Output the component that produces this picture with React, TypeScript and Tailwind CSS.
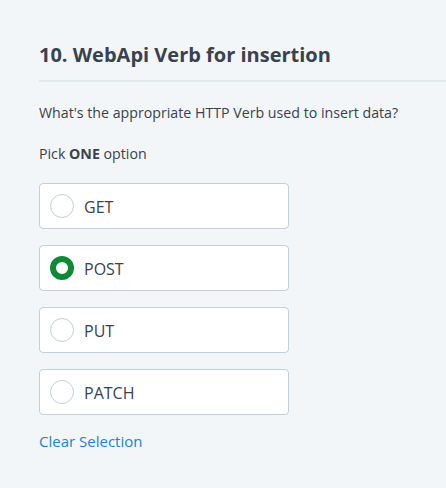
import React from "react";

const options = ["GET", "POST", "PUT", "PATCH"];

export default function App() {
  const selected = "POST";
  return (
    <div
      className="w-[446px] h-[488px] bg-[#f3f6f8] text-[#39424e] pl-[39px] pt-[40px] overflow-hidden"
      style={{ fontFamily: '"Open Sans", sans-serif' }}
    >
      <h2 className="text-[20px] font-bold leading-[30px] text-[#39424e]">10. WebApi Verb for insertion</h2>
      <div className="mt-[10px] h-[2px] bg-[#e4e9ec]" />
      <p className="mt-[20px] text-[14.2px] leading-[22px] text-[#39424e]">What's the appropriate HTTP Verb used to insert data?</p>
      <p className="mt-[19px] text-[14.2px] leading-[22px] text-[#39424e]">
        Pick <span className="font-bold">ONE</span> option
      </p>
      <div className="mt-[18px] flex flex-col gap-[16px] w-[250px]">
        {options.map((o) => (
          <div
            key={o}
            className="h-[46px] bg-white border border-[#c2cfd6] rounded-[4px] flex items-center pl-[10px]"
          >
            {o === selected ? (
              <div className="w-[24px] h-[24px] rounded-full border-[6px] border-[#0e8a36] bg-white" />
            ) : (
              <div className="w-[24px] h-[24px] rounded-full border border-[#c2cfd6] bg-white" />
            )}
            <span className="ml-[10px] text-[16px] leading-[24px] pt-[1px] text-[#39424e]">{o}</span>
          </div>
        ))}
      </div>
      <div className="mt-[15px] text-[15px] leading-[22px] text-[#1a85c9]">Clear Selection</div>
    </div>
  );
}
